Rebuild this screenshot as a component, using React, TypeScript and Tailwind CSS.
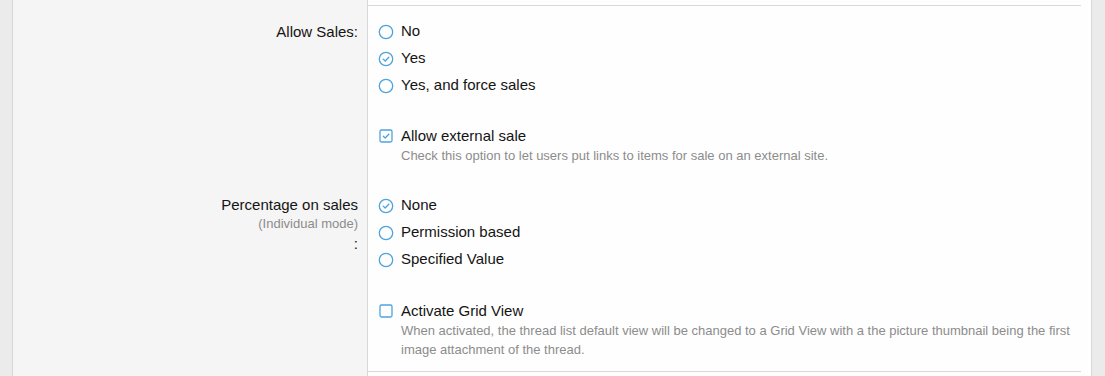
import React from 'react';

function Radio({ checked }: { checked?: boolean }) {
  return (
    <svg width="16" height="16" viewBox="0 0 16 16" className="shrink-0">
      <circle cx="8" cy="8" r="6.7" fill="none" stroke="#4ea3dd" strokeWidth="1.3" />
      {checked && (
        <path d="M5.2 8.1 L7.2 10 L10.8 6.2" fill="none" stroke="#4ea3dd" strokeWidth="1.3" strokeLinecap="round" strokeLinejoin="round" />
      )}
    </svg>
  );
}

function Checkbox({ checked }: { checked?: boolean }) {
  return (
    <svg width="16" height="16" viewBox="0 0 16 16" className="shrink-0">
      <rect x="2" y="2" width="12" height="12" rx="1.5" fill="none" stroke="#4ea3dd" strokeWidth="1.3" />
      {checked && (
        <path d="M5.3 8.2 L7.2 10 L10.8 6.3" fill="none" stroke="#4ea3dd" strokeWidth="1.3" strokeLinecap="round" strokeLinejoin="round" />
      )}
    </svg>
  );
}

function RadioRow({ label, checked }: { label: string; checked?: boolean }) {
  return (
    <div className="flex items-center gap-[7px] h-[27px]">
      <Radio checked={checked} />
      <span>{label}</span>
    </div>
  );
}

function CheckRow({ label, desc, checked }: { label: string; desc: string; checked?: boolean }) {
  return (
    <div>
      <div className="flex items-center gap-[7px] h-[20px]">
        <Checkbox checked={checked} />
        <span>{label}</span>
      </div>
      <p className="ml-[23px] text-[13px] leading-[19px] text-[#8c8c8c]">{desc}</p>
    </div>
  );
}

export default function App() {
  return (
    <div
      className="h-[376px] overflow-hidden bg-[#ebebeb] pl-[12px] pr-[13px] text-[15px] text-[#141414]"
      style={{ fontFamily: '"Liberation Sans", Arial, sans-serif' }}
    >
      <div className="flex h-full border-x border-[#d8d8d8]">
        <div className="w-[355px] shrink-0 bg-[#f5f5f5] border-r border-[#d8d8d8] pr-[9px] text-right">
          <div className="h-[18px]" />
          <div className="leading-[27px]">Allow Sales:</div>
          <div className="h-[150px]" />
          <div className="leading-[20px]">Percentage on sales</div>
          <div className="text-[13px] leading-[18px] text-[#8c8c8c]">(Individual mode)</div>
          <div className="leading-[22px]">:</div>
        </div>
        <div className="flex-1 bg-[#fefefe]">
          <div className="h-[5px]" />
          <div className="mr-[10px] border-t border-[#d8d8d8]" />
          <div className="pl-[10px] pt-[12px] pr-[10px]">
            <RadioRow label="No" />
            <RadioRow label="Yes" checked />
            <RadioRow label="Yes, and force sales" />
            <div className="mt-[27px]">
              <CheckRow
                checked
                label="Allow external sale"
                desc="Check this option to let users put links to items for sale on an external site."
              />
            </div>
            <div className="mt-[27px]">
              <RadioRow label="None" checked />
              <RadioRow label="Permission based" />
              <RadioRow label="Specified Value" />
            </div>
            <div className="mt-[28px]">
              <CheckRow
                label="Activate Grid View"
                desc="When activated, the thread list default view will be changed to a Grid View with a the picture thumbnail being the first image attachment of the thread."
              />
            </div>
          </div>
          <div className="mt-[12px] mr-[10px] border-t border-[#d8d8d8]" />
        </div>
      </div>
    </div>
  );
}
